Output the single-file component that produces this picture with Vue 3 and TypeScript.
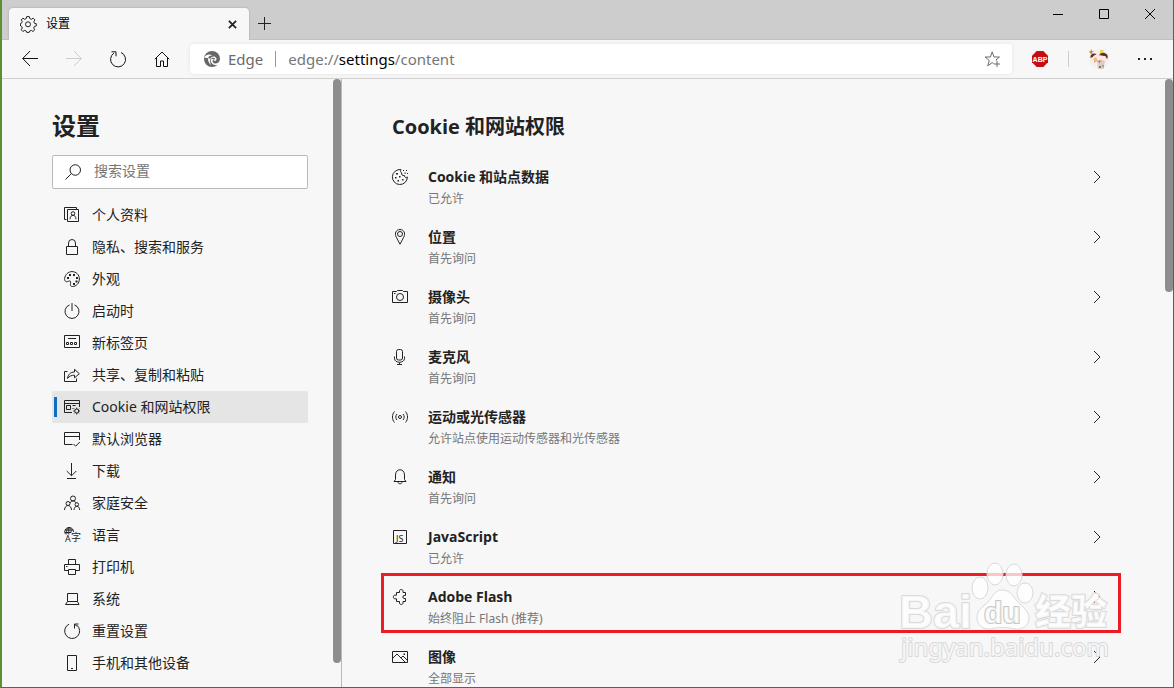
<script setup lang="ts">
import { ref } from 'vue'

interface Glyph {
  line?: string
  solid?: string
  letters?: { x: number; y: number; size: number; text: string }[]
}
interface NavItem {
  label: string
  icon: Glyph
}
interface Permission {
  title: string
  note: string
  icon: Glyph
  marked?: boolean
}

const query = ref('')
const address = ref('edge://settings/content')
const current = ref('Cookie 和网站权限')

const navItems: NavItem[] = [
  {
    label: '个人资料',
    icon: { line: 'M3.5 2.5h11v12h-11zM2.5 12.5h-2V.5h12v2M7.2 6.5a1.8 1.8 0 1 0 3.6 0a1.8 1.8 0 1 0-3.6 0M6 12.2c0-5.2 6-5.2 6 0' },
  },
  { label: '隐私、搜索和服务', icon: { line: 'M2.5 7.5h11v8h-11zM4.5 7.5V4a3.5 3.5 0 0 1 7 0v3.5' } },
  {
    label: '外观',
    icon: {
      line: 'M.6 7.5C1.2 3.400 4.300.6 8 .6c4.200 0 7.400 3.200 7.400 7.400S12.200 15.500 8.500 15.500c-2.200 0-2.400-1.500-2-3 .5-2-.4-3.300-2-2.300C2.500 11.500.400 10.500.600 7.500z',
      solid: 'M5 3h2v2H5zM9 3h2v2H9zM3 6h2v2H3zM12 6h2v2h-2zM11.500 9.500h2v2h-2zM9 12h2v2H9z',
    },
  },
  { label: '启动时', icon: { line: 'M8 0v8M5.500 1.900a7 7 0 1 0 5 0' } },
  {
    label: '新标签页',
    icon: { line: 'M.5.5h15v12h-15zM4 3.500h8M2.500 7.500h2v2h-2zM6.500 7.500h2v2h-2zM10.500 7.500h2v2h-2z' },
  },
  {
    label: '共享、复制和粘贴',
    icon: { line: 'M3.500 4.500h-3v10h12v-3M3.500 11.500C4 7.500 6.500 5 10.500 5V2.300L15.300 6.700l-4.800 4.200V8.200C7.500 8.200 5.500 9 3.500 11.500z' },
  },
  {
    label: 'Cookie 和网站权限',
    icon: {
      line: 'M8 13.500H.5v-12h15V8M.5 4.500h15M2.500 6.500h4v4h-4zM8.500 6.500h3M8.500 9.500h1M10.700 12a2 2 0 1 0 4 0a2 2 0 1 0-4 0M12.700 8.700V10M12.700 14v1.500M9.400 12h1.300M14.700 12H16M10.400 9.700l1 1M14 13.300l1 1M15 9.700l-1 1M11.400 13.300l-1 1',
    },
  },
  { label: '默认浏览器', icon: { line: 'M8.500 13.500H.5v-12h15V9M.5 5.500h15M9.500 13l2.200 2.200L15.800 11' } },
  { label: '下载', icon: { line: 'M7.500 0v12.500M2.700 8l4.800 4.800L12.300 8M3 15.500h9' } },
  {
    label: '家庭安全',
    icon: {
      line: 'M6.500 3.500a2.500 2.500 0 1 0 5 0a2.500 2.500 0 1 0-5 0M2 8.500a2 2 0 1 0 4 0a2 2 0 1 0-4 0M11 9.500a1.800 1.800 0 1 0 3.600 0a1.800 1.800 0 1 0-3.600 0M.5 15c.3-6 6.700-6 7 0M10 15c.3-5 5.500-5 5.700 0M6 8c1-2.700 5.500-2.700 6 0',
    },
  },
  {
    label: '语言',
    icon: {
      line: 'M2 7.500C-.8 5 1.500.5 5 .5c3 0 4.500 2 4.500 4.500M4.800.5v7M1 3h8M1 5.500h6M3 7C2 4 3 1 5 .5c2 1 2.500 3 2 5',
      letters: [
        { x: 1, y: 15, size: 9, text: 'A' },
        { x: 7, y: 14, size: 10, text: '字' },
      ],
    },
  },
  { label: '打印机', icon: { line: 'M4.500 11.500h-4v-6h15v6h-4M4.500 5.500v-5h7v5M4.500 10.500h7v5h-7z', solid: 'M2 7h1.500v1H2z' } },
  { label: '系统', icon: { line: 'M3.500 2.500h10v8h-10zM3.500 10.500l-2 3h13.500l-1.500-3' } },
  { label: '重置设置', icon: { line: 'M5 1.200a7.500 7.500 0 1 0 7.500.7M10.500 5.500V1h4M10.500 1l2.500 2.500' } },
  { label: '手机和其他设备', icon: { line: 'M3.500.5h9v15h-9zM7 13.500h2' } },
]

const permissions: Permission[] = [
  {
    title: 'Cookie 和站点数据',
    note: '已允许',
    icon: {
      line: 'M9 .600A7.500 7.500 0 1 0 15.400 8c-1.500 1-3.200.2-3-1.500C10.500 7 9 5.500 9.800 4 8.500 3.500 8.300 1.800 9 .600z',
      solid: 'M4 4h2v1.500H4zM7 7h1.500v1.500H7zM3 8h1.500v1.500H3zM5.500 11h1.500v1.500H5.500zM10 10h1.500v1.500H10zM11 1h1v1h-1zM14 1h1v1h-1zM12.500 3.500h1.200v1.200h-1.200zM15 4h1v1h-1z',
    },
  },
  {
    title: '位置',
    note: '首先询问',
    icon: { line: 'M8 15.200L4.300 8.200C2 4 4.500.5 8 .5s6 3.500 3.700 7.700zM5.500 5a2.500 2.500 0 1 0 5 0a2.500 2.500 0 1 0-5 0' },
  },
  {
    title: '摄像头',
    note: '首先询问',
    icon: { line: 'M.5 2.500h4l1-1h5l1 1h4v11H.5zM4.500 8a3.500 3.500 0 1 0 7 0a3.500 3.500 0 1 0-7 0M2 4.500h1.500' },
  },
  {
    title: '麦克风',
    note: '首先询问',
    icon: { line: 'M6.500.5h2a2 2 0 0 1 2 2V9a2 2 0 0 1-2 2h-2a2 2 0 0 1-2-2V2.500a2 2 0 0 1 2-2zM2.500 7.500V9.500c0 5 10 5 10 0V7.500M7.500 13.500v2M5 15.500h5' },
  },
  {
    title: '运动或光传感器',
    note: '允许站点使用运动传感器和光传感器',
    icon: { line: 'M6.500 8a1.500 1.500 0 1 0 3 0a1.500 1.500 0 1 0-3 0M5 5c-1.600 1.700-1.600 4.300 0 6M11 5c1.600 1.700 1.600 4.300 0 6M2.500 2.500c-2.700 3-2.700 8 0 11M13.500 2.500c2.700 3 2.700 8 0 11' },
  },
  {
    title: '通知',
    note: '首先询问',
    icon: { line: 'M2 12.500h12l-1.500-2V6c0-7-9-7-9 0v4.500zM6 12.800c0 2.700 4 2.700 4 0' },
  },
  {
    title: 'JavaScript',
    note: '已允许',
    icon: { line: 'M1.500 1.500h13v13h-13z', letters: [{ x: 4, y: 13, size: 9, text: 'JS' }] },
  },
  {
    title: 'Adobe Flash',
    note: '始终阻止 Flash (推荐)',
    marked: true,
    icon: { line: 'M4.500 3.500h3V2c0-2 3.500-2 3.500 0v1.500h2.500v3h-1.500c-1.500 0-1.500 3 0 3h1.500v3H11V14c0 2-3.500 2-3.500 0v-1.500h-3V9.800H3c-2.200 0-2.200-3.600 0-3.600h1.500z' },
  },
  {
    title: '图像',
    note: '全部显示',
    icon: { line: 'M.5 2.500h15v11H.5zM.5 9.500l4.500-4.500 8.500 8.500M9 9l2-2 4.500 4.500', solid: 'M11.500 4.500h1.500v1.500h-1.500z' },
  },
]
</script>

<template>
  <div class="window">
    <header class="titlebar">
      <div class="tab">
        <svg class="icon" viewBox="0 0 16 16" aria-hidden="true">
          <path d="M6.700.6h2.600l.5 2 1.600.7 1.800-1.100 1.700 1.700-1.100 1.800.7 1.600 1.800.4v2.200l-1.900.5-.7 1.600 1.100 1.800-1.800 1.700-1.700-1.100-1.600.6-.5 1.400H6.700l-.5-1.400-1.600-.6-1.700 1.100-1.700-1.700L2.300 12l-.7-1.600-1.100-.5V7.500l1.100-.4L2.300 5.500 1.200 3.800 3 2.200l1.600 1.100 1.600-.7z" />
          <circle cx="8" cy="8.300" r="2.500" />
        </svg>
        <span class="tab-title">设置</span>
        <button class="plain" aria-label="关闭标签页">
          <svg class="tab-x" viewBox="0 0 10 10"><path d="M1 1l8 8M9 1L1 9" /></svg>
        </button>
      </div>
      <button class="plain new-tab" aria-label="新建标签页">
        <svg class="plus" viewBox="0 0 13 13"><path d="M6.500 0v13M0 6.500h13" /></svg>
      </button>
      <div class="window-buttons">
        <button class="plain" aria-label="最小化"><svg viewBox="0 0 10 10"><path d="M0 5.500h10" /></svg></button>
        <button class="plain" aria-label="最大化"><svg viewBox="0 0 10 10"><path d="M.5.5h9v9H.5z" /></svg></button>
        <button class="plain" aria-label="关闭"><svg viewBox="0 0 10 10"><path d="M0 0l10 10M10 0L0 10" /></svg></button>
      </div>
    </header>

    <div class="toolbar">
      <button class="plain tool" aria-label="后退">
        <svg class="icon" viewBox="0 0 16 16"><path d="M16 7.500H.8M8 0L.700 7.500 8 15" /></svg>
      </button>
      <button class="plain tool" aria-label="前进" disabled>
        <svg class="icon" viewBox="0 0 16 16"><path d="M0 7.500h15.200M8 0l7.300 7.500L8 15" /></svg>
      </button>
      <button class="plain tool" aria-label="刷新">
        <svg class="icon" viewBox="0 0 16 16"><path d="M11 1.500A7.500 7.500 0 1 1 4 2.100M1.500.8H6v4.500" /></svg>
      </button>
      <button class="plain tool" aria-label="主页">
        <svg class="icon" viewBox="0 0 16 16"><path d="M.8 8.200L8 1l7.200 7.200M2.500 7v8.500h4V10h3v5.500h4V7" /></svg>
      </button>
      <div class="address">
        <svg class="icon edge-logo" viewBox="0 0 16 16" aria-hidden="true">
          <circle cx="8" cy="8" r="8" class="disc" />
          <path class="gap" d="M0 6.500C2 3.500 6 2.800 8.500 4.600 5.500 4.300 3.900 6 4 8.300c.1 2.500 1.500 4.700 3.500 6-2-3-2.200-6.300-.2-8 1.800-1.500 4.200-1 5 .8.600 1.500-.1 2.900-1.300 2.900-.9 0-1.500-.7-1.400-1.700-1.600 1-1.200 3.800 1.200 4.200 2.300.4 4.500-1.100 5.200-3.500l-.2 3.200c-2 2.500-5.500 2.500-7.500.6C6 10.500 6.300 7.500 8.500 6.800c1.500-.4 2.800.5 2.800 1.800" />
        </svg>
        <span class="site">Edge</span>
        <span class="bar"></span>
        <a class="url" :href="address">edge://<b>settings</b>/content</a>
        <button class="plain" aria-label="将此页添加到收藏夹">
          <svg class="star" viewBox="0 0 17 16"><path d="M12.500 9.500l-.6-.5 3.600-3H10L8.200.8 6.400 6H1l4.300 3.500-1.600 5.300 4.500-3.200 1.500 1M13 10v6M10 13h6" /></svg>
        </button>
      </div>
      <button class="plain abp" aria-label="Adblock Plus">
        <svg class="icon" viewBox="0 0 16 16">
          <path class="stop" d="M4.700 0h6.600L16 4.700v6.600L11.300 16H4.700L0 11.300V4.700z" />
          <text x="8" y="11" text-anchor="middle">ABP</text>
        </svg>
      </button>
      <span class="bar pale"></span>
      <button class="plain avatar" aria-label="个人资料">
        <svg viewBox="0 0 20 20">
          <circle cx="10" cy="10" r="10" fill="#f3f0f0" />
          <path d="M2 0l1 2 2 .5-2 1L2.500 5.500 1 4l-1-1.500 1.500-.3z" fill="#c98a20" />
          <path d="M12 0l1 1.500 2-.5-1 2 .5 2-2-1-2 .5.500-2z" fill="#f3d326" />
          <circle cx="6" cy="8.500" r="4.500" fill="#ffe9dc" />
          <circle cx="14" cy="8" r="4.500" fill="#ffe9dc" />
          <path d="M1.500 9c-.5-4 2.500-5.500 6-4-.8 1.200-2.500 1-3 2-.6 1.500-1.600 1-3 2zM10 6.500c1-3 5-4 8-1 1 1.500 1 3 0 4.500-1-1.500-.8-2.500-2-3-2 0-4-1.500-6-.5z" fill="#563029" />
          <path d="M8 12l4-1 4 1-1.500 8H9z" fill="#dccdc4" />
          <path d="M9 12l1.500 2L12 11M10 17h2v2h-2zM13 16h1.500v3" fill="#8b7167" />
          <path d="M4 10l3 3 2-1-2-4zM12 10l-1 2 3 1" fill="#f6b59b" />
          <path d="M5 11l2 2-2 .5z" fill="#ec9d3c" />
        </svg>
      </button>
      <button class="plain more" aria-label="设置及其他">
        <svg viewBox="0 0 15 2"><path d="M0 0h2v2H0zM6 0h2v2H6zM12 0h2v2h-2z" /></svg>
      </button>
    </div>

    <div class="page">
      <aside class="side">
        <div class="side-body">
          <h1>设置</h1>
          <label class="search">
            <svg class="icon" viewBox="0 0 16 16" aria-hidden="true"><path d="M5 6a5 5 0 1 0 10.500 0A5 5 0 1 0 5 6M6.500 9.500L.5 15.500" /></svg>
            <input v-model="query" type="text" placeholder="搜索设置" aria-label="搜索设置" />
          </label>
          <nav>
            <a
              v-for="item in navItems"
              :key="item.label"
              href="#"
              class="nav-item"
              :class="{ active: item.label === current }"
              @click.prevent="current = item.label"
            >
              <svg class="icon" viewBox="0 0 16 16" aria-hidden="true">
                <path v-if="item.icon.line" :d="item.icon.line" />
                <path v-if="item.icon.solid" class="solid" :d="item.icon.solid" />
                <text v-for="l in item.icon.letters" :key="l.text" :x="l.x" :y="l.y" :font-size="l.size">{{ l.text }}</text>
              </svg>
              <span>{{ item.label }}</span>
            </a>
          </nav>
        </div>
        <div class="track"><div class="thumb side-thumb"></div></div>
      </aside>

      <main class="main">
        <div class="main-body">
          <h2>Cookie 和网站权限</h2>
          <button v-for="p in permissions" :key="p.title" class="row" :class="{ marked: p.marked }">
            <svg class="icon" viewBox="0 0 16 16" aria-hidden="true">
              <path v-if="p.icon.line" :d="p.icon.line" />
              <path v-if="p.icon.solid" class="solid" :d="p.icon.solid" />
              <text v-for="l in p.icon.letters" :key="l.text" :x="l.x" :y="l.y" :font-size="l.size">{{ l.text }}</text>
            </svg>
            <span class="words">
              <span class="title">{{ p.title }}</span>
              <span class="note">{{ p.note }}</span>
            </span>
            <svg class="chevron" viewBox="0 0 8 12" aria-hidden="true"><path d="M1 0l6 6-6 6" /></svg>
          </button>
        </div>
        <div class="track"><div class="thumb main-thumb"></div></div>
      </main>
    </div>

    <svg class="watermark" viewBox="0 0 218 104" aria-hidden="true">
      <ellipse cx="84" cy="28" rx="8" ry="11" />
      <ellipse cx="99" cy="14" rx="8" ry="11" />
      <ellipse cx="118" cy="15" rx="8" ry="11" />
      <ellipse cx="129" cy="33" rx="8" ry="10" />
      <path d="M106 30c8 0 11 6 15 11 5 5 12 10 12 17 0 8-7 12-14 11-8-2-17-2-24 0-8 1-14-4-14-12 0-7 7-11 12-16 4-5 6-11 13-11z" />
      <text x="3" y="68" class="wm-latin">Bai</text>
      <text x="88" y="63" class="wm-du">du</text>
      <text x="139" y="65" class="wm-cjk">经验</text>
      <text x="5" y="96" class="wm-site">jingyan.baidu.com</text>
    </svg>
  </div>
</template>

<style>
html,
body {
  margin: 0;
  overflow: hidden;
}
</style>

<style scoped>
.window {
  position: relative;
  box-sizing: border-box;
  height: 100vh;
  display: flex;
  flex-direction: column;
  overflow: hidden;
  border-left: 2px solid #5f8f35;
  border-right: 1px solid #56624b;
  border-bottom: 1px solid #55693c;
  background: #f7f7f7;
  color: #222;
  font-family: 'Noto Sans', 'Noto Sans CJK SC', sans-serif;
  font-size: 14px;
}
svg {
  display: block;
  flex: none;
  fill: none;
  stroke: currentColor;
}
svg text {
  fill: currentColor;
  stroke: none;
}
.icon {
  width: 16px;
  height: 16px;
  overflow: visible;
}
.solid {
  fill: currentColor;
  stroke: none;
}
.plain {
  display: flex;
  align-items: center;
  justify-content: center;
  padding: 0;
  border: 0;
  background: none;
  color: inherit;
  font: inherit;
}

.titlebar {
  flex: none;
  display: flex;
  align-items: flex-start;
  height: 40px;
  background: #cdcdcd;
  box-shadow: inset 0 -1px #c0c0c0;
}
.tab {
  display: flex;
  align-items: center;
  box-sizing: border-box;
  width: 240px;
  height: 32px;
  margin: 8px 0 0 7px;
  padding: 0 12px 0 11px;
  border-radius: 4px 4px 0 0;
  background: #f7f7f7;
  box-shadow: 0 0 2px #999;
  clip-path: inset(-3px -3px 0 -3px);
}
.tab-title {
  flex: 1;
  margin-left: 10px;
  font-size: 12px;
  line-height: 16px;
  color: #000;
}
.tab-x {
  width: 9px;
  height: 9px;
  stroke-width: 2;
}
.new-tab {
  width: 31px;
  height: 31px;
  margin-top: 8px;
}
.plus {
  width: 13px;
  height: 13px;
}
.window-buttons {
  display: flex;
  margin-left: auto;
  color: #000;
}
.window-buttons .plain {
  width: 46px;
  height: 28px;
}
.window-buttons svg {
  width: 10px;
  height: 10px;
}

.toolbar {
  flex: none;
  display: flex;
  align-items: center;
  box-sizing: border-box;
  height: 39px;
  padding-left: 6px;
  border-bottom: 1px solid #d0d0d0;
}
.tool {
  width: 44px;
  height: 32px;
  color: #111;
}
.tool:disabled {
  color: #ccc;
}
.address {
  flex: 1;
  display: flex;
  align-items: center;
  height: 30px;
  margin-left: 6px;
  padding: 0 11px 0 14px;
  border-radius: 4px;
  background: #fff;
  box-shadow: 0 0 4px #e4e4e4;
  font-size: 15px;
  line-height: 20px;
  color: #6b6b6b;
}
.edge-logo .disc {
  fill: #666;
  stroke: none;
}
.edge-logo .gap {
  fill: #fff;
  fill-rule: evenodd;
  stroke: none;
}
.site {
  margin: 0 12px 0 8px;
}
.bar {
  width: 1px;
  height: 16px;
  background: #999;
}
.bar.pale {
  background: #ccc;
}
.url {
  flex: 1;
  margin-left: 12px;
  color: #767676;
  text-decoration: none;
}
.url b {
  font-weight: 400;
  color: #000;
}
.star {
  width: 17px;
  height: 16px;
}
.abp {
  margin: 0 20px;
}
.abp .stop {
  fill: #c70d10;
  stroke: none;
}
.abp text {
  fill: #fff;
  font: 700 7px 'Liberation Sans', sans-serif;
}
.avatar {
  margin-left: 20px;
}
.avatar svg {
  width: 20px;
  height: 20px;
  stroke: none;
}
.more {
  width: 15px;
  height: 20px;
  margin: 0 20px 0 29px;
}
.more svg {
  width: 15px;
  height: 2px;
  fill: #222;
  stroke: none;
}

.page {
  flex: 1;
  display: flex;
  min-height: 0;
}
.side {
  display: flex;
  flex: none;
  border-right: 1px solid #b9b9b9;
}
.side-body {
  width: 256px;
  padding: 31px 25px 0 50px;
  overflow: hidden;
}
h1 {
  margin: 0 0 13px;
  font-size: 24px;
  line-height: 32px;
  font-weight: 700;
}
h2,
.title {
  font-family: 'Open Sans', 'Noto Sans CJK SC', sans-serif;
}
.search {
  display: flex;
  align-items: center;
  box-sizing: border-box;
  height: 34px;
  margin-bottom: 10px;
  padding: 0 12px;
  border: 1px solid #bababa;
  border-radius: 2px;
  background: #fff;
}
.search input {
  flex: 1;
  min-width: 0;
  margin-left: 13px;
  padding: 0 0 2px;
  border: 0;
  outline: 0;
  background: none;
  font: inherit;
  line-height: 20px;
}
.search input::placeholder {
  color: #767676;
}
.nav-item {
  display: flex;
  align-items: center;
  gap: 12px;
  height: 32px;
  padding: 0 12px;
  border-radius: 2px;
  color: #222;
  line-height: 20px;
  text-decoration: none;
}
.nav-item.active {
  background: linear-gradient(#0f6cc4, #0f6cc4) 2px 50% / 3px 20px no-repeat #e5e5e5;
}
.track {
  flex: none;
  width: 8px;
}
.thumb {
  border-radius: 4px;
  background: #8d8d8d;
}
.side-thumb {
  height: 96%;
}
.main-thumb {
  height: 35%;
}

.main {
  flex: 1;
  display: flex;
  min-width: 0;
}
.main-body {
  flex: 1;
  min-width: 0;
  padding: 34px 44px 0 39px;
  overflow: hidden;
}
h2 {
  margin: 0 0 12px;
  padding-left: 11px;
  font-size: 20px;
  line-height: 28px;
  font-weight: 700;
}
.row {
  display: flex;
  align-items: flex-start;
  box-sizing: border-box;
  width: 100%;
  height: 60px;
  padding: 13px 20px 0 11px;
  border: 0;
  background: none;
  color: #222;
  font: inherit;
  text-align: left;
}
.row.marked {
  outline: 3px solid #ed1c24;
  outline-offset: -3px;
}
.row .icon {
  margin-top: 3px;
}
.words {
  flex: 1;
  margin-left: 20px;
}
.title,
.note {
  display: block;
}
.title {
  font-weight: 700;
  line-height: 22px;
}
.note {
  margin-top: 2px;
  font-size: 12px;
  line-height: 18px;
  color: #767676;
}
.chevron {
  width: 8px;
  height: 12px;
  margin-top: 5px;
}

.watermark {
  position: absolute;
  right: 59px;
  bottom: 23px;
  width: 218px;
  height: 104px;
  fill: #fff;
  fill-opacity: 0.75;
  stroke: #dadada;
  pointer-events: none;
}
.watermark text {
  fill: #fff;
  stroke: #dadada;
  stroke-width: 2px;
  stroke-linejoin: round;
  paint-order: stroke;
}
.watermark .wm-latin {
  font: 700 47px 'Liberation Sans', sans-serif;
}
.watermark .wm-du {
  font: 700 30px 'Liberation Sans', sans-serif;
  stroke: #c8c8c8;
}
.watermark .wm-cjk {
  font: 900 36px 'Noto Sans CJK SC', sans-serif;
}
.watermark .wm-site {
  font: 400 24px 'Noto Sans', sans-serif;
}
</style>
